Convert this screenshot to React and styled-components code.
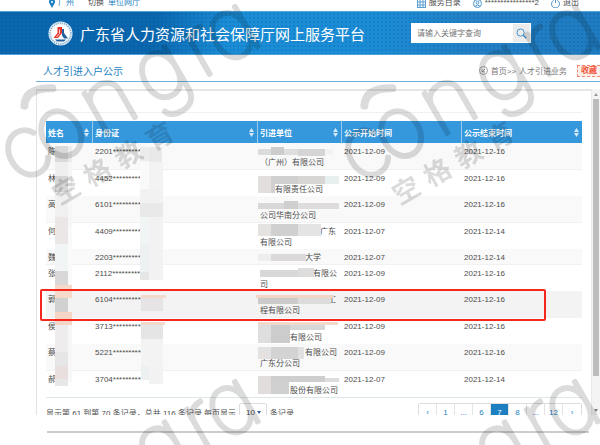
import React, { useState } from 'react';
import styled, { ThemeProvider, createGlobalStyle } from 'styled-components';

const theme = {
    colors: {
        blue: '#1c7fc1',
        head: '#3598dc',
        line: '#6db3dc',
        text: '#4c4c4c',
        muted: '#777777',
        red: '#f5271d',
    },
    fontSizes: { small: '8px', medium: '10px', big: '15px' },
};

const records = [
    { name: '陈', id: '2201*********', unit: [['', 0], ['（广州）有限公司', 0]], start: '2021-12-09', end: '2021-12-16' },
    { name: '林', id: '4452*********', unit: [['', 0], ['有限责任公司', 15]], start: '2021-12-09', end: '2021-12-16' },
    { name: '高', id: '6101*********', unit: [['', 0], ['公司华南分公司', 0]], start: '2021-12-09', end: '2021-12-16' },
    { name: '何', id: '4409*********', unit: [['广东', 60], ['有限公司', 0]], start: '2021-12-07', end: '2021-12-14' },
    { name: '魏', id: '2203*********', unit: [['大学', 45]], start: '2021-12-07', end: '2021-12-14' },
    { name: '张', id: '2112*********', unit: [['有限公', 53], ['司', 0]], start: '2021-12-09', end: '2021-12-16' },
    { name: '郭', id: '6104*********', unit: [['工', 68], ['程有限公司', 0]], start: '2021-12-09', end: '2021-12-16', active: true },
    { name: '侯', id: '3713*********', unit: [['', 0], ['有限公司', 30]], start: '2021-12-09', end: '2021-12-16' },
    { name: '蔡', id: '5221**********', unit: [['有限公司', 45], ['广东分公司', 0]], start: '2021-12-09', end: '2021-12-16' },
    { name: '郝', id: '3704**********', unit: [['', 0], ['股份有限公司', 30]], start: '2021-12-07', end: '2021-12-14' },
];

const columns = [
    { label: '姓名', width: 47, sort: true },
    { label: '身份证', width: 165, sort: true },
    { label: '引进单位', width: 84, sort: true },
    { label: '公示开始时间', width: 120 },
    { label: '公示结束时间', width: 120, sort: true },
];

// x, y, width, height, colour
const mosaic = [
    [9, 25, 13, 16, '#d9d9d9'], [22, 25, 4, 16, '#ececec'],
    [9, 41, 13, 14, '#f0efef'], [22, 41, 4, 66, '#f6f6f6'],
    [9, 55, 13, 16, '#d6d6d6'], [9, 71, 13, 25, '#f1f0f0'],
    [9, 96, 13, 27, '#ebe7e7'], [9, 123, 13, 27, '#f1f5f6'], [22, 107, 4, 60, '#fafafa'],
    [9, 150, 13, 14, '#d9d7d7'], [9, 164, 17, 13, '#f5d9ca'],
    [9, 177, 13, 14, '#d2d1d1'], [9, 191, 17, 13, '#f5d6c6'],
    [9, 204, 13, 27, '#eeecec'], [9, 231, 13, 14, '#e6e6e6'], [22, 204, 4, 57, '#f7f7f7'],
    [9, 245, 13, 13, '#e9dfdf'], [9, 258, 13, 7, '#e8e8e8'],
    [94, 26, 9, 14, '#ededed'], [103, 26, 13, 15, '#e9e9e9'],
    [94, 41, 9, 27, '#fafafa'], [103, 41, 14, 27, '#f3f3f3'],
    [94, 68, 23, 14, '#f2f2f2'], [94, 82, 23, 14, '#e9e9e9'],
    [94, 96, 9, 27, '#f1f5f5'], [103, 96, 14, 63, '#f2f2f2'],
    [94, 123, 9, 28, '#edf1f1'], [94, 151, 9, 8, '#e6e6e6'],
    [95, 174, 25, 3, '#f2d9cb'], [95, 177, 22, 13, '#e6e4e4'],
    [95, 201, 24, 3, '#f2d9cb'], [95, 204, 22, 14, '#e5e5e5'],
    [95, 218, 22, 27, '#f3f3f3'], [95, 245, 8, 14, '#edf0f0'], [103, 245, 14, 18, '#f2f2f2'],
    [212, 28, 13, 6, '#dcdcdc'], [225, 26, 13, 8, '#cccccc'], [238, 28, 14, 6, '#dedede'],
    [252, 28, 27, 7, '#d5d5d5'], [279, 28, 8, 6, '#f2f2f2'],
    [212, 55, 13, 17, '#e3dede'], [225, 55, 27, 8, '#d0d0d0'], [252, 55, 27, 8, '#d8d5d5'],
    [279, 55, 14, 8, '#e8efef'], [225, 63, 4, 9, '#d0d0d0'],
    [212, 82, 26, 6, '#d8d8d8'], [238, 80, 14, 8, '#cfcfcf'], [252, 82, 41, 6, '#dedcdc'],
    [212, 103, 13, 12, '#e5e2e2'], [225, 103, 27, 12, '#d0d0d0'], [252, 103, 23, 12, '#e5e4e4'],
    [212, 133, 13, 7, '#eeeeee'], [225, 133, 35, 7, '#dbd9d9'],
    [214, 149, 38, 7, '#d8d8d8'], [252, 147, 16, 9, '#dfdcdc'],
    [210, 174, 78, 3, '#f2d5c5'], [212, 177, 40, 6, '#cbcbcb'], [252, 177, 33, 6, '#dcdcdc'],
    [212, 201, 80, 3, '#f2d9cb'], [212, 204, 13, 18, '#dedede'], [225, 204, 19, 18, '#cccccc'],
    [244, 204, 35, 5, '#d7d7d7'],
    [212, 226, 13, 12, '#e4e1e1'], [225, 226, 27, 12, '#d3d3d3'], [252, 226, 6, 12, '#e1e1e1'],
    [212, 255, 13, 18, '#e1dddd'], [225, 255, 54, 6, '#cecece'], [279, 257, 14, 4, '#dddddd'],
    [225, 261, 18, 12, '#d0d0d0'],
];

const pages = ['‹', '1', '...', '6', '7', '8', '...', '12', '›'];

const letters = [['c', -2], ['o', 38], ['n', 94], ['g', 155], ['r', 201], ['a', 236]];

const PinIcon = () => (
    <svg width="6" height="9" viewBox="0 0 6 9">
        <path d="M3 9 0.5 4.5A3 3 0 1 1 5.5 4.5Z" fill="#1c7fc1" />
        <circle cx="3" cy="3" r="1" fill="#fff" />
    </svg>
);

const GridIcon = () => (
    <svg width="9" height="9" viewBox="0 0 9 9" fill="none" stroke="#5b9fd0">
        <rect x="0.5" y="0.5" width="8" height="8" />
        <path d="M0 3H9M0 6H9M3 0V9M6 0V9" />
    </svg>
);

const UserIcon = () => (
    <svg width="9" height="9" viewBox="0 0 9 9" fill="none" stroke="#4a93cc">
        <circle cx="4.5" cy="4.5" r="4" />
        <circle cx="4.5" cy="3.6" r="1.4" />
        <path d="M2 7.4Q4.5 4.4 7 7.4" />
    </svg>
);

const PowerIcon = () => (
    <svg width="9" height="9" viewBox="0 0 9 9" fill="none" stroke="#4a93cc">
        <path d="M2.6 1.4A4 4 0 1 0 6.4 1.4M4.5 0V4" />
    </svg>
);

const SearchIcon = () => (
    <svg width="11" height="11" viewBox="0 0 11 11" fill="none" stroke="#4596d3">
        <circle cx="4.6" cy="4.6" r="3.6" />
        <path d="M7.2 7.2 10.2 10.2" strokeWidth="1.6" />
    </svg>
);

const HomeIcon = () => (
    <svg width="9" height="9" viewBox="0 0 9 9" fill="none" stroke="#888" strokeWidth="0.8">
        <circle cx="4.5" cy="4.5" r="4" />
        <path d="M3 3V5.8H5.8M3 5.8 6 3" />
    </svg>
);

const SortIcon = () => (
    <svg width="5" height="9" viewBox="0 0 5 9" fill="#d5eaf8">
        <path d="M2.5 0 5 4H0ZM2.5 9 0 5H5Z" />
    </svg>
);

const CaretIcon = () => (
    <svg width="4" height="3" viewBox="0 0 4 3" fill="#2b5c9c">
        <path d="M0 0H4L2 3Z" />
    </svg>
);

const Logo = () => (
    <svg width="25" height="25" viewBox="0 0 25 25">
        <circle cx="12.5" cy="12.5" r="12" fill="#e9f1f7" />
        <circle cx="12.5" cy="12.5" r="10.5" fill="none" stroke="#7da9cb" strokeWidth="1.4" strokeDasharray="1.2 1" />
        <circle cx="12.5" cy="12.5" r="8.8" fill="#fff" />
        <path d="M9.500 6H14V12L10 17H5.500L9.500 12Z" fill="#e8352c" />
        <path d="M14 8H16V12L20 17.500H16L14 14.500ZM7 18.500H18L16 20.500H9Z" fill="#20619d" />
        <path d="M11.500 8.500V12.500L8.500 16" fill="none" stroke="#fff" strokeWidth="0.8" />
    </svg>
);

const Watermark = () => (
    <WatermarkLayer aria-hidden="true">
        {[[0, 0], [340, 0], [0, 375], [340, 375]].map(([x, y]) => (
            <g key={`${x}-${y}`} transform={`translate(${x + 28} ${y + 152}) rotate(-30)`} opacity="0.14">
                {letters.map(([letter, left]) => (
                    <MarkLetter key={letter} x={left} y="24">{letter}</MarkLetter>
                ))}
                <path d="M20 -42Q30 -57 53 -43" fill="none" stroke="#000" strokeWidth="8" strokeLinecap="round" />
                {['空', '格', '教', '育'].map((char, i) => (
                    <MarkCaption key={char} x={14 + i * 36} y="62">{char}</MarkCaption>
                ))}
            </g>
        ))}
    </WatermarkLayer>
);

const App = () => {
    const [page, setPage] = useState('7');
    const [keyword, setKeyword] = useState('');

    return (
        <ThemeProvider theme={theme}>
            <GlobalStyle />
            <TopBar>
                <TopGroup $gap="14px">
                    <TopLink href="#city" $blue><PinIcon />广州</TopLink>
                    <TopGroup $gap="4px">
                        <TopLink href="#switch">切换</TopLink>
                        <TopLink href="#unit" $blue>单位网厅</TopLink>
                    </TopGroup>
                </TopGroup>
                <TopGroup $gap="12px">
                    <TopLink href="#services"><GridIcon />服务目录</TopLink>
                    <TopLink href="#user"><UserIcon />****************2</TopLink>
                    <TopLink href="#logout"><PowerIcon />退出</TopLink>
                </TopGroup>
            </TopBar>
            <Banner>
                <Logo />
                <BannerTitle>广东省人力资源和社会保障厅网上服务平台</BannerTitle>
                <SearchForm onSubmit={(e) => e.preventDefault()}>
                    <SearchInput
                        aria-label="请输入关键字查询"
                        placeholder="请输入关键字查询"
                        value={keyword}
                        onChange={(e) => setKeyword(e.target.value)}
                    />
                    <SearchButton aria-label="查询"><SearchIcon /></SearchButton>
                </SearchForm>
            </Banner>
            <Main>
                <TitleRow>
                    <PageTitle>人才引进入户公示</PageTitle>
                    <Crumbs>
                        <HomeIcon />
                        <CrumbLink href="#home">首页&gt;&gt;</CrumbLink>
                        <CrumbLink href="#talent">人才引进业务</CrumbLink>
                    </Crumbs>
                    <FavButton>收藏</FavButton>
                </TitleRow>
                <PanelRow>
                    <Panel>
                        <Toolbar />
                        <TableWrapper>
                            <Table>
                                <colgroup>
                                    {columns.map((col) => <Col key={col.label} $width={col.width} />)}
                                </colgroup>
                                <thead>
                                    <tr>
                                        {columns.map((col) => (
                                            <HeadCell key={col.label}>
                                                <HeadLabel>
                                                    {col.label}
                                                    {col.sort && <SortIcon />}
                                                </HeadLabel>
                                            </HeadCell>
                                        ))}
                                    </tr>
                                </thead>
                                <tbody>
                                    {records.map((record) => (
                                        <TableRow key={record.id} $active={record.active}>
                                            <Cell>{record.name}</Cell>
                                            <Cell>{record.id}</Cell>
                                            <Cell>
                                                {record.unit.map(([text, indent], i) => (
                                                    <UnitLine key={i} $indent={indent}>{text}</UnitLine>
                                                ))}
                                            </Cell>
                                            <Cell>{record.start}</Cell>
                                            <Cell>{record.end}</Cell>
                                        </TableRow>
                                    ))}
                                </tbody>
                            </Table>
                            <Mosaic viewBox="0 0 536 278" preserveAspectRatio="none" aria-hidden="true">
                                {mosaic.map(([x, y, w, h, fill]) => (
                                    <rect key={`${x}-${y}`} x={x} y={y} width={w} height={h} fill={fill} />
                                ))}
                            </Mosaic>
                            <Highlight />
                        </TableWrapper>
                        <TableFooter>
                            <PageSize>
                                显示第 61 到第 70 条记录，总共 116 条记录 每页显示
                                <SelectBox>
                                    <SizeSelect aria-label="每页显示" defaultValue="10">
                                        <option>10</option>
                                        <option>25</option>
                                    </SizeSelect>
                                    <CaretIcon />
                                </SelectBox>
                                条记录
                            </PageSize>
                            <Pagination>
                                {pages.map((label, i) => (
                                    <PageButton key={i} $active={label === page} onClick={() => setPage(label)}>
                                        {label}
                                    </PageButton>
                                ))}
                            </Pagination>
                        </TableFooter>
                    </Panel>
                    <ScrollTrack>
                        <ScrollArrow />
                        <ScrollThumb />
                        <ScrollArrow $down />
                    </ScrollTrack>
                </PanelRow>
                <BottomLine />
            </Main>
            <Watermark />
        </ThemeProvider>
    );
};

export default App;

const GlobalStyle = createGlobalStyle`
  * {
    box-sizing: border-box;
  }

  body {
    margin: 0;
    background: #ffffff;
    color: #4c4c4c;
    font-family: "Liberation Sans", "Noto Sans CJK SC", sans-serif;
    font-size: 8px;
    overflow-x: hidden;
  }

  button, input, select {
    font: inherit;
    margin: 0;
    padding: 0;
  }

  svg {
    flex: none;
  }
`;

const TopBar = styled.div`
  display: flex;
  justify-content: space-between;
  align-items: flex-end;
  height: 11px;
  padding: 0 21px 0 49px;
  overflow: hidden;
`;

const TopGroup = styled.div`
  display: flex;
  gap: ${({ $gap }) => $gap};
`;

const TopLink = styled.a`
  display: flex;
  align-items: center;
  gap: 3px;
  line-height: 16px;
  color: ${({ theme, $blue }) => ($blue ? theme.colors.blue : theme.colors.text)};
  text-decoration: none;
  white-space: nowrap;
`;

const Banner = styled.header`
  display: flex;
  align-items: center;
  height: 44px;
  padding: 0 69px 0 48px;
  border-top: 1px solid #4fa3da;
  border-bottom: 1px solid #4fa3da;
  background:
    radial-gradient(circle, rgba(0, 50, 120, 0.14) 1px, transparent 1px) 0 0 / 4px 4px,
    linear-gradient(100deg, #0a67ae 0%, #0a67ae 26%, #1a8dd6 38%, #1a8dd6 62%, #2380c4 78%, #1f7cc0 100%);
`;

const BannerTitle = styled.h1`
  flex: 1;
  margin: 0 0 0 7px;
  color: #ffffff;
  font-size: ${({ theme }) => theme.fontSizes.big};
  font-weight: 400;
  white-space: nowrap;
`;

const SearchForm = styled.form`
  display: flex;
  width: 120px;
  height: 20px;
  background: #ffffff;
`;

const SearchInput = styled.input`
  flex: 1;
  min-width: 0;
  padding-left: 6px;
  border: 0;
  background: transparent;
  outline: none;

  &::placeholder {
    color: #757575;
  }
`;

const SearchButton = styled.button`
  display: flex;
  align-items: center;
  justify-content: center;
  width: 19px;
  border: 1px solid #ffffff;
  background: #ececec;
`;

const Main = styled.main`
  padding-left: 36px;
`;

const TitleRow = styled.div`
  display: flex;
  align-items: center;
  height: 27px;
  padding: 5px 0 0 7px;
  border-bottom: 1px solid ${({ theme }) => theme.colors.line};
`;

const PageTitle = styled.h2`
  flex: 1;
  margin: 0;
  color: ${({ theme }) => theme.colors.blue};
  font-size: ${({ theme }) => theme.fontSizes.medium};
  font-weight: 400;
`;

const Crumbs = styled.nav`
  display: flex;
  align-items: center;
  gap: 3px;
`;

const CrumbLink = styled.a`
  color: ${({ theme }) => theme.colors.muted};
  text-decoration: none;
`;

const FavButton = styled.button`
  width: 23px;
  height: 12px;
  margin-left: 10px;
  border: 1px dashed #f08a70;
  border-right: 0;
  background: #fdeee9;
  color: #f0553a;
  font-weight: 700;
  line-height: 10px;
`;

const PanelRow = styled.div`
  display: flex;
  height: 326px;
  margin-top: 7px;
`;

const Panel = styled.section`
  flex: 1;
  min-width: 0;
  padding: 0 9px;
  border-top: 2px solid #e6e6e6;
  border-left: 1px solid #dde3e6;
  overflow: hidden;
`;

const Toolbar = styled.div`
  height: 22px;
  margin-bottom: 8px;
  border-bottom: 1px solid #f1f1f1;
`;

const TableWrapper = styled.div`
  position: relative;
`;

const Table = styled.table`
  width: 100%;
  table-layout: fixed;
  border-collapse: separate;
  border-spacing: 0;
  border-bottom: 1px solid #dde7ea;
`;

const Col = styled.col`
  width: ${({ $width }) => ($width / 536) * 100}%;
`;

const HeadCell = styled.th`
  height: 22px;
  padding: 0 3px 0 2px;
  border-right: 1px solid #9acbed;
  background: ${({ theme }) => theme.colors.head};
  color: #ffffff;

  &:last-child {
    border-right: 0;
  }
`;

const HeadLabel = styled.div`
  display: flex;
  align-items: center;
  justify-content: space-between;
`;

const Cell = styled.td`
  padding: 3px 2px 1px;
  line-height: 11px;
  vertical-align: top;
  white-space: nowrap;
`;

const TableRow = styled.tr`
  background: ${({ $active }) => ($active ? '#f3f3f3' : '#ffffff')};

  &:nth-child(odd) {
    background: ${({ $active }) => ($active ? '#f3f3f3' : '#f9f9f9')};
  }

  &:nth-child(odd) ${Cell} {
    border-bottom: 1px solid #f1f1f1;
  }
`;

const UnitLine = styled.div`
  height: 11px;
  padding-left: ${({ $indent }) => $indent}px;
`;

const Highlight = styled.div`
  position: absolute;
  top: 168px;
  left: -6px;
  right: 36px;
  height: 32px;
  border: 2px solid ${({ theme }) => theme.colors.red};
  border-radius: 2px;
`;

const Mosaic = styled.svg`
  position: absolute;
  top: 0;
  left: 0;
  width: 100%;
  height: 278px;
`;

const TableFooter = styled.div`
  display: flex;
  justify-content: space-between;
  margin-top: 5px;
`;

const PageSize = styled.label`
  display: flex;
  align-items: center;
  gap: 3px;
  height: 18px;
  white-space: nowrap;
`;

const SelectBox = styled.span`
  display: flex;
  align-items: center;
  width: 28px;
  height: 18px;
  padding-right: 5px;
  border: 1px solid #dddddd;
  border-radius: 2px;
  background: #ffffff;
`;

const SizeSelect = styled.select`
  flex: 1;
  min-width: 0;
  padding-left: 6px;
  border: 0;
  appearance: none;
  background: transparent;
  color: ${({ theme }) => theme.colors.text};
`;

const Pagination = styled.nav`
  display: flex;
  border: 1px solid #dddddd;
  border-radius: 2px;
`;

const PageButton = styled.button`
  min-width: 18px;
  height: 16px;
  border: 0;
  border-right: 1px solid #e4e4e4;
  background: ${({ theme, $active }) => ($active ? theme.colors.blue : '#ffffff')};
  color: ${({ theme, $active }) => ($active ? '#ffffff' : theme.colors.blue)};

  &:last-child {
    border-right: 0;
  }
`;

const ScrollTrack = styled.div`
  display: flex;
  flex-direction: column;
  align-items: center;
  width: 9px;
  border-left: 1px solid #e6ecee;
  background: #f4f4f4;
`;

const ScrollArrow = styled.div`
  margin: 4px 0 3px;
  border: 2px solid transparent;
  border-top: ${({ $down }) => ($down ? '3px solid #777' : '0')};
  border-bottom: ${({ $down }) => ($down ? '0' : '3px solid #999')};
`;

const ScrollThumb = styled.div`
  flex: none;
  width: 6px;
  height: 85%;
  margin-bottom: auto;
  background: #bdbdbd;
`;

const BottomLine = styled.hr`
  height: 2px;
  margin: 16px 11px 0;
  border: 0;
  background: #cccccc;
`;

const WatermarkLayer = styled.svg`
  position: fixed;
  top: 0;
  left: 0;
  width: 100%;
  height: 100%;
  pointer-events: none;
`;

const MarkLetter = styled.text`
  font-family: Inter, "Liberation Sans", sans-serif;
  font-size: 86px;
  font-weight: 100;
  font-feature-settings: "cv11";
  text-anchor: middle;
  stroke: #000000;
  stroke-width: 4px;
  stroke-linejoin: round;
`;

const MarkCaption = styled.text`
  font-family: "Noto Sans CJK SC", sans-serif;
  font-size: 27px;
  font-weight: 700;
  text-anchor: middle;
`;
